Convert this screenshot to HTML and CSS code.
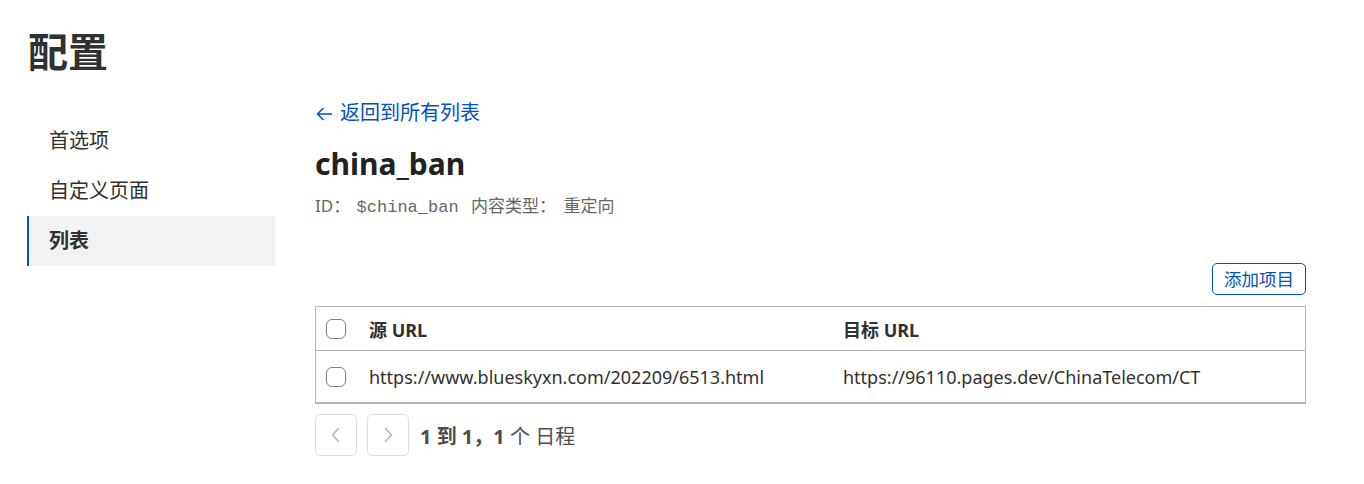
FILE: index.html
```html
<!DOCTYPE html>
<html lang="zh-CN">
<head>
<meta charset="utf-8">
<link rel="stylesheet" href="styles.css">
</head>
<body>
<div class="page">
  <h1 class="page-title">配置</h1>
  <div class="layout">
    <nav class="sidenav">
      <a class="nav-item">首选项</a>
      <a class="nav-item">自定义页面</a>
      <a class="nav-item active">列表</a>
    </nav>
    <main class="main">
      <a class="back-link"><svg class="arrow" width="17" height="14" viewBox="0 0 17 14"><path d="M16 7 H1.5 M7.5 1 L1.5 7 L7.5 13" fill="none" stroke="#0051c3" stroke-width="1.5"/></svg>返回到所有列表</a>
      <h2 class="list-title">china_ban</h2>
      <div class="meta">ID： <code>$china_ban</code> 内容类型： <span class="value">重定向</span></div>
      <div class="toolbar"><button class="btn-outline">添加项目</button></div>
      <div class="table">
        <div class="row head">
          <div class="cell check"><span class="checkbox"></span></div>
          <div class="cell src">源 URL</div>
          <div class="cell dst">目标 URL</div>
        </div>
        <div class="row">
          <div class="cell check"><span class="checkbox"></span></div>
          <div class="cell src">https://www.blueskyxn.com/202209/6513.html</div>
          <div class="cell dst">https://96110.pages.dev/ChinaTelecom/CT</div>
        </div>
      </div>
      <div class="pager">
        <button class="page-btn"><svg width="14" height="20" viewBox="0 0 14 20"><path d="M10 3 L3.5 10 L10 17" fill="none" stroke="#b0b0b0" stroke-width="1.4"/></svg></button>
        <button class="page-btn"><svg width="14" height="20" viewBox="0 0 14 20"><path d="M4 3 L10.5 10 L4 17" fill="none" stroke="#b0b0b0" stroke-width="1.4"/></svg></button>
        <span class="page-info"><b>1 到 1，1</b> 个 日程</span>
      </div>
    </main>
  </div>
</div>
</body>
</html>
```

FILE: styles.css
```css
* { box-sizing: border-box; }
html, body { margin: 0; padding: 0; background: #fff; }
body {
  font-family: "Noto Sans", "Noto Sans CJK SC", sans-serif;
  color: #313131;
}
.page { padding: 24px 0 0 28px; }
.page-title {
  margin: 0;
  font-size: 40px;
  line-height: 56px;
  font-weight: 700;
  color: #313131;
}
.layout { display: flex; margin-top: 36px; }
.sidenav {
  width: 248px;
  margin-left: -1px;
  display: flex;
  flex-direction: column;
  flex-shrink: 0;
}
.nav-item {
  display: block;
  height: 50px;
  line-height: 50px;
  padding-left: 20px;
  font-size: 20px;
  color: #313131;
  border-left: 2px solid transparent;
}
.nav-item.active {
  background: #f2f2f2;
  border-left-color: #0051c3;
  font-weight: 700;
}
.main {
  margin-left: 40px;
  width: 991px;
  margin-top: -18px;
}
.back-link {
  display: flex;
  align-items: center;
  color: #0051c3;
  font-size: 20px;
  line-height: 30px;
}
.arrow { margin: 2px 7px 0 1px; }
.list-title {
  margin: 16px 0 0;
  font-size: 30px;
  line-height: 40px;
  font-weight: 700;
  color: #222;
}
.meta {
  margin-top: 10px;
  font-size: 17px;
  line-height: 24px;
  color: #666;
}
.meta code {
  font-family: "Liberation Mono", monospace;
  font-size: 17px;
  margin: 0 8px 0 2px;
}
.meta .value { margin-left: 3px; }
.toolbar {
  display: flex;
  justify-content: flex-end;
  margin-top: 43px;
}
.btn-outline {
  font-family: inherit;
  font-size: 17.5px;
  color: #0051c3;
  background: #fff;
  border: 1px solid #0051c3;
  border-radius: 5px;
  height: 32px;
  padding: 0 11px;
  line-height: 30px;
}
.table {
  margin-top: 11px;
  border: 1px solid #b6b6b6;
  border-bottom: 2px solid #b6b6b6;
}
.row {
  display: flex;
  align-items: center;
  height: 51px;
  font-size: 18px;
  color: #313131;
}
.row.head {
  height: 44px;
  font-weight: 700;
  border-bottom: 1px solid #b6b6b6;
}
.cell.check { width: 53px; padding-left: 10px; display: flex; }
.cell.src { width: 474px; }
.checkbox {
  width: 20px;
  height: 20px;
  border: 1px solid #808080;
  border-radius: 6px;
  background: #fff;
}
.pager {
  display: flex;
  align-items: center;
  gap: 10px;
  margin-top: 10px;
}
.page-btn {
  width: 42px;
  height: 42px;
  border: 1px solid #dedede;
  border-radius: 5px;
  background: #fff;
  display: flex;
  align-items: center;
  justify-content: center;
  padding: 0;
}
.page-info {
  font-size: 20px;
  color: #4d4d4d;
  margin-left: 1px;
}
.page-info b { font-weight: 700; }
```
